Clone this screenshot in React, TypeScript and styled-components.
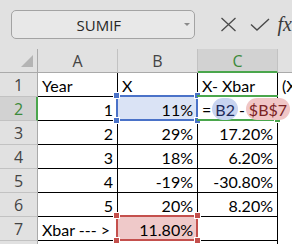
import React from "react";
import styled, { createGlobalStyle, css } from "styled-components";

const Global = createGlobalStyle`
  html, body { margin: 0; padding: 0; background: #ffffff; }
  body { width: 292px; height: 244px; overflow: hidden; }
`;

const Page = styled.div`
  width: 292px;
  height: 244px;
  display: flex;
  flex-direction: column;
  background: #e1e1e1;
  overflow: hidden;
`;

const FormulaBar = styled.div`
  height: 49px;
  flex: none;
  display: flex;
  align-items: flex-start;
  padding: 10px 0 0 11px;
  box-sizing: border-box;
  background: #e1e1e1;
  white-space: nowrap;
`;

const NameBox = styled.div`
  width: 185px;
  height: 29px;
  box-sizing: border-box;
  border: 1px solid #a3a3a3;
  border-radius: 5px;
  background: #e8e8e8;
  display: flex;
  align-items: center;
  font-family: "Open Sans", "Noto Sans", sans-serif;
  font-size: 15px;
  color: #262626;
`;

const NameText = styled.span`
  flex: 1;
  text-align: center;
  padding-left: 2px;
`;

const DropArrow = styled.span`
  width: 0;
  height: 0;
  margin-right: 4px;
  border-left: 3px solid transparent;
  border-right: 3px solid transparent;
  border-top: 3px solid #8a8a8a;
`;

const BarIcons = styled.div`
  display: flex;
  align-items: center;
  height: 29px;
  margin-left: 25px;
  gap: 13px;
`;

const Fx = styled.span`
  font-family: "Liberation Serif", "DejaVu Serif", serif;
  font-style: italic;
  font-size: 20px;
  color: #3a3a3a;
  margin-left: -5px;
`;

const Grid = styled.div`
  display: grid;
  grid-template-columns: 38px 80px 80px 80px 1fr;
  grid-auto-rows: 24px;
  background: #ffffff;
  font-family: "Lato", "Carlito", "Liberation Sans", sans-serif;
  font-size: 16px;
  color: #000000;
`;

const ColHead = styled.div<{ $sel?: boolean }>`
  box-sizing: border-box;
  background: ${(p) => (p.$sel ? "#d2d2d2" : "#e1e1e1")};
  border-right: 1px solid #c2c2c2;
  border-bottom: ${(p) => (p.$sel ? "2px solid #4aa64c" : "1px solid #aaaaaa")};
  display: flex;
  align-items: center;
  justify-content: center;
  padding-top: ${(p) => (p.$sel ? "1px" : "0")};
  color: ${(p) => (p.$sel ? "#3c8a3a" : "#444444")};
  font-family: "Open Sans", "Noto Sans", sans-serif;
  font-size: 16px;
`;

const Corner = styled.div`
  box-sizing: border-box;
  background: #e1e1e1;
  border-right: 1px solid #aaaaaa;
  border-bottom: 1px solid #aaaaaa;
  display: flex;
  align-items: flex-end;
  justify-content: flex-end;
  padding: 0 4px 5px 0;
`;

const CornerTri = styled.span`
  width: 0;
  height: 0;
  border-left: 12px solid transparent;
  border-bottom: 12px solid #b4b4b4;
`;

const RowHead = styled.div<{ $sel?: boolean }>`
  box-sizing: border-box;
  background: ${(p) => (p.$sel ? "#d2d2d2" : "#e1e1e1")};
  border-bottom: 1px solid #c2c2c2;
  border-right: ${(p) => (p.$sel ? "2px solid #4aa64c" : "1px solid #aaaaaa")};
  display: flex;
  align-items: center;
  justify-content: center;
  padding-left: ${(p) => (p.$sel ? "1px" : "0")};
  color: ${(p) => (p.$sel ? "#3c8a3a" : "#444444")};
  font-family: "Open Sans", "Noto Sans", sans-serif;
  font-size: 16px;
`;

const Cell = styled.div<{ $right?: boolean; $open?: boolean; $fill?: string; $raise?: boolean }>`
  box-sizing: border-box;
  position: relative;
  z-index: ${(p) => (p.$raise ? 4 : "auto")};
  background: ${(p) => p.$fill || "#ffffff"};
  ${(p) =>
    p.$open
      ? css``
      : css`
          border-right: 1px solid #000000;
          border-bottom: 1px solid #000000;
        `}
  display: flex;
  align-items: center;
  justify-content: ${(p) => (p.$right ? "flex-end" : "flex-start")};
  padding: 1px 4px 0 4px;
  white-space: nowrap;
`;

const Frame = styled.div<{ $color: string }>`
  position: absolute;
  left: -2px;
  top: -2px;
  right: -1px;
  bottom: -1px;
  border: 2px solid ${(p) => p.$color};
  pointer-events: none;
  z-index: 2;
`;

const Handle = styled.span<{ $color: string; $x: "l" | "r"; $y: "t" | "b" }>`
  position: absolute;
  width: 5px;
  height: 5px;
  background: ${(p) => p.$color};
  border: 1px solid #ffffff;
  ${(p) => (p.$x === "l" ? "left: -5px;" : "right: -5px;")}
  ${(p) => (p.$y === "t" ? "top: -5px;" : "bottom: -5px;")}
`;

const EditFrame = styled.div`
  position: absolute;
  left: -1px;
  right: -1px;
  top: -2px;
  bottom: -1px;
  border-top: 2px solid #4aa64c;
  border-bottom: 2px solid #4aa64c;
  pointer-events: none;
  z-index: 2;
`;

const EditHandle = styled.span`
  position: absolute;
  right: -3px;
  bottom: -4px;
  width: 5px;
  height: 5px;
  background: #4aa64c;
  border: 1px solid #ffffff;
`;

const Formula = styled.div`
  position: absolute;
  left: 3px;
  top: 1px;
  bottom: 1px;
  display: flex;
  align-items: center;
  z-index: 3;
  white-space: nowrap;
`;

const Ref = styled.span<{ $bg: string; $fg: string }>`
  display: inline-flex;
  align-items: center;
  height: 21px;
  padding: 1px 3px 0 3px;
  border-radius: 11px;
  background: ${(p) => p.$bg};
  color: ${(p) => p.$fg};
`;

const Op = styled.span`
  padding: 1px 1px 0 1px;
`;

const Selected = ({ color }: { color: string }) => (
  <Frame $color={color}>
    <Handle $color={color} $x="l" $y="t" />
    <Handle $color={color} $x="r" $y="t" />
    <Handle $color={color} $x="l" $y="b" />
    <Handle $color={color} $x="r" $y="b" />
  </Frame>
);

const rows: [string, string, string, string][] = [
  ["Year", "X", "X- Xbar", "(X"],
  ["1", "11%", "", ""],
  ["2", "29%", "17.20%", ""],
  ["3", "18%", "6.20%", ""],
  ["4", "-19%", "-30.80%", ""],
  ["5", "20%", "8.20%", ""],
  ["Xbar --- >", "11.80%", "", ""],
];

export default function App() {
  return (
    <>
      <Global />
      <Page>
        <FormulaBar>
          <NameBox>
            <NameText>SUMIF</NameText>
            <DropArrow />
          </NameBox>
          <BarIcons>
            <svg width="17" height="15" viewBox="0 0 17 15">
              <path d="M1.5 1 L15.5 14 M15.5 1 L1.5 14" stroke="#4a4a4a" strokeWidth="1.3" fill="none" />
            </svg>
            <svg width="20" height="13" viewBox="0 0 20 13">
              <path d="M1 6.5 L7 12 L19 1" stroke="#4a4a4a" strokeWidth="1.4" fill="none" />
            </svg>
            <Fx>fx</Fx>
          </BarIcons>
        </FormulaBar>
        <Grid>
          <Corner>
            <CornerTri />
          </Corner>
          <ColHead>A</ColHead>
          <ColHead>B</ColHead>
          <ColHead $sel>C</ColHead>
          <ColHead />
          {rows.map((r, i) => {
            const n = i + 1;
            const isText0 = n === 1 || n === 7;
            return (
              <React.Fragment key={n}>
                <RowHead $sel={n === 2}>{n}</RowHead>
                <Cell $right={!isText0}>{r[0]}</Cell>
                <Cell
                  $right={n !== 1}
                  $fill={n === 2 ? "#dae3f5" : n === 7 ? "#efc9c9" : undefined}
                >
                  {n === 2 && <Selected color="#4a72c8" />}
                  {n === 7 && <Selected color="#c4504d" />}
                  {r[1]}
                </Cell>
                <Cell $right={n !== 1} $raise={n === 2}>
                  {n === 2 && (
                    <>
                      <EditFrame>
                        <EditHandle />
                      </EditFrame>
                      <Formula>
                        <Op>=</Op>
                        <Ref $bg="#c8d4f0" $fg="#1e2a5a">B2</Ref>
                        <Op>-</Op>
                        <Ref $bg="#f0c6c6" $fg="#7a2323">$B$7</Ref>
                      </Formula>
                    </>
                  )}
                  {r[2]}
                </Cell>
                <Cell $open>{r[3]}</Cell>
              </React.Fragment>
            );
          })}
          <RowHead />
          <Cell />
          <Cell />
          <Cell />
          <Cell $open />
        </Grid>
      </Page>
    </>
  );
}
